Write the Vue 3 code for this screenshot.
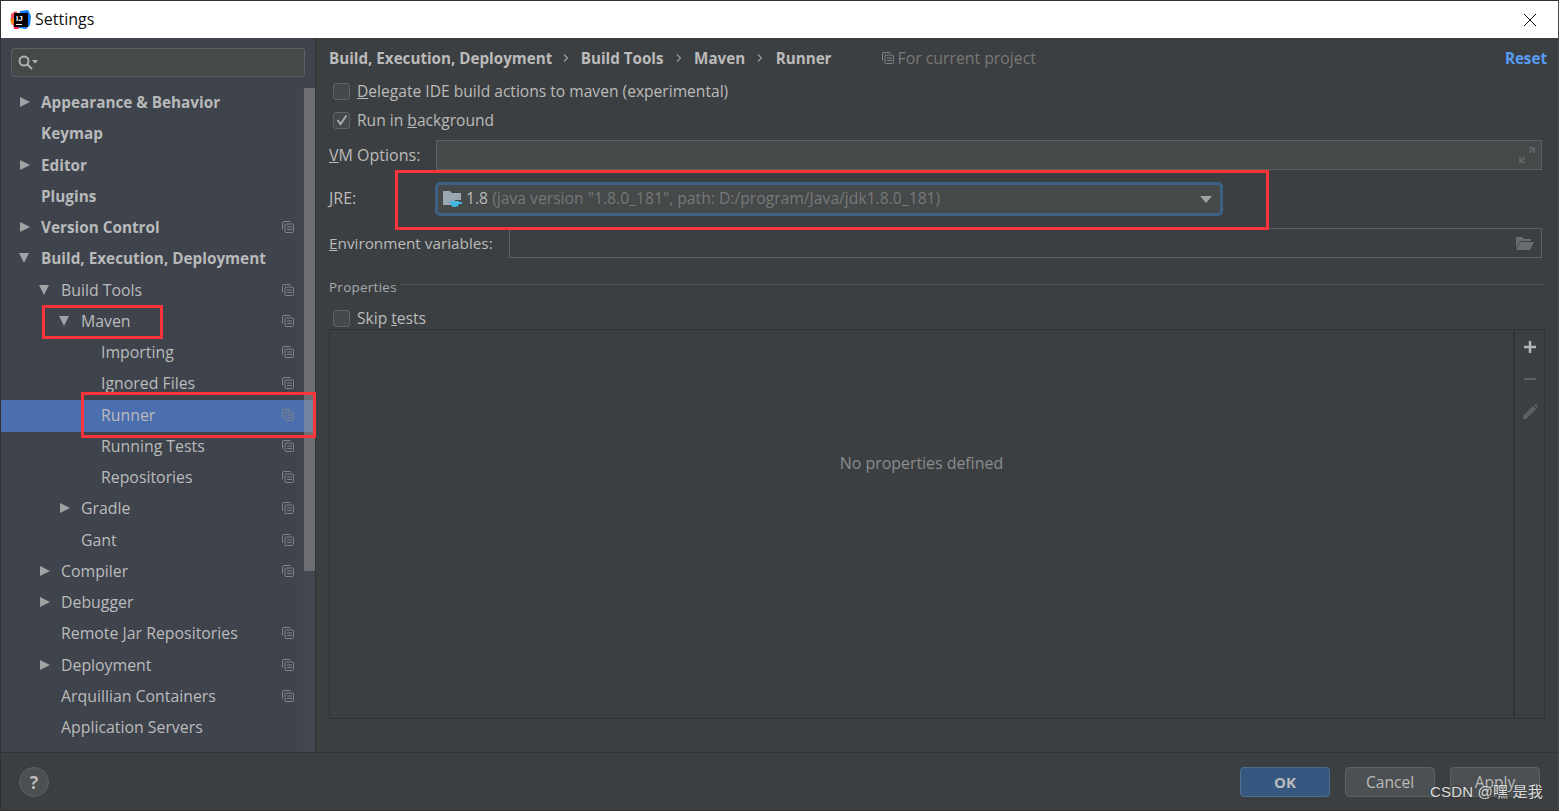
<script setup>
const tree = [
  { label: 'Appearance & Behavior', depth: 0, arrow: 'right', bold: true },
  { label: 'Keymap', depth: 0, bold: true },
  { label: 'Editor', depth: 0, arrow: 'right', bold: true },
  { label: 'Plugins', depth: 0, bold: true },
  { label: 'Version Control', depth: 0, arrow: 'right', bold: true, copy: true },
  { label: 'Build, Execution, Deployment', depth: 0, arrow: 'down', bold: true },
  { label: 'Build Tools', depth: 1, arrow: 'down', copy: true },
  { label: 'Maven', depth: 2, arrow: 'down', copy: true },
  { label: 'Importing', depth: 3, copy: true },
  { label: 'Ignored Files', depth: 3, copy: true },
  { label: 'Runner', depth: 3, copy: true, selected: true },
  { label: 'Running Tests', depth: 3, copy: true },
  { label: 'Repositories', depth: 3, copy: true },
  { label: 'Gradle', depth: 2, arrow: 'right', copy: true },
  { label: 'Gant', depth: 2, copy: true },
  { label: 'Compiler', depth: 1, arrow: 'right', copy: true },
  { label: 'Debugger', depth: 1, arrow: 'right' },
  { label: 'Remote Jar Repositories', depth: 1, copy: true },
  { label: 'Deployment', depth: 1, arrow: 'right', copy: true },
  { label: 'Arquillian Containers', depth: 1, copy: true },
  { label: 'Application Servers', depth: 1 }
]
const crumbs = ['Build, Execution, Deployment', 'Build Tools', 'Maven', 'Runner']
const marks = [
  { name: 'maven', left: 41, top: 304, width: 121, height: 34 },
  { name: 'runner', left: 80, top: 391, width: 235, height: 46 },
  { name: 'jre', left: 394, top: 169, width: 874, height: 60 }
]
</script>

<template>
  <div class="window">
    <header class="titlebar">
      <svg class="logo" width="21" height="20" viewBox="0 0 21 20">
        <path d="M1 4 6 1 9 5 4 12 1 10Z" fill="#fc4a5c" />
        <path d="M0 9 5 8 6 15 2 15Z" fill="#f97a12" />
        <path d="M3 14 8 12 9 19 4 19Z" fill="#fe2857" />
        <path d="M10 1 18 0 21 6 20 15 16 19 9 18Z" fill="#087cfa" />
        <path d="M4 3H18V17H4Z" fill="#000" />
        <text x="6" y="10.5" class="logo-text">IJ</text>
        <path d="M6 14H12V15H6Z" fill="#fff" />
      </svg>
      <span class="title">Settings</span>
      <svg class="close" width="14" height="14" viewBox="0 0 14 14">
        <path d="M1 1 13 13M13 1 1 13" stroke="#111" stroke-width="1" fill="none" />
      </svg>
    </header>

    <div class="body">
      <aside class="sidebar">
        <div class="search">
          <svg width="22" height="18" viewBox="0 0 22 18">
            <circle cx="7" cy="7" r="4.5" fill="none" stroke="#afb1b3" stroke-width="2" />
            <path d="M10.5 10.5 15 15" stroke="#afb1b3" stroke-width="2" />
            <path d="M15 6H21L18 9.5Z" fill="#afb1b3" />
          </svg>
        </div>
        <ul class="tree">
          <li
            v-for="item in tree"
            :key="item.label"
            class="row"
            :class="{ selected: item.selected, bold: item.bold }"
            :style="{ paddingLeft: 40 + item.depth * 20 + 'px' }"
          >
            <span v-if="item.arrow" class="arrow" :class="item.arrow"></span>
            <span>{{ item.label }}</span>
            <svg v-if="item.copy" class="copy" width="12" height="12" viewBox="0 0 12 12">
              <path d="M8.5 .5H2A1.500 1.500 0 0 0 .5 2V8.500" fill="none" stroke="#7f8386" />
              <rect x="3" y="3" width="8.500" height="8.500" rx="1" fill="none" stroke="#7f8386" />
              <path d="M5 6H10M5 8.500H10" stroke="#7f8386" />
            </svg>
          </li>
        </ul>
        <div class="scrolltrack"><div class="scrollthumb"></div></div>
      </aside>

      <main class="content">
        <div class="crumbs">
          <template v-for="(c, i) in crumbs" :key="c">
            <span class="crumb">{{ c }}</span>
            <svg v-if="i < crumbs.length - 1" class="sep" width="6" height="10" viewBox="0 0 6 10">
              <path d="M1 1.500 4.500 5 1 8.500" fill="none" stroke="#9a9c9e" stroke-width="1.200" />
            </svg>
          </template>
          <span class="project">
            <svg width="12" height="12" viewBox="0 0 12 12">
              <path d="M8.500 .5H2A1.500 1.500 0 0 0 .5 2V8.500" fill="none" stroke="#7f8386" />
              <rect x="3" y="3" width="8.500" height="8.500" rx="1" fill="none" stroke="#7f8386" />
              <path d="M5 6H10M5 8.500H10" stroke="#7f8386" />
            </svg>
            For current project
          </span>
          <a class="reset">Reset</a>
        </div>

        <label class="check first"><span class="box"></span><span><u>D</u>elegate IDE build actions to maven (experimental)</span></label>
        <label class="check second">
          <span class="box">
            <svg width="12" height="12" viewBox="0 0 12 12"><path d="M1.500 6 4.500 10 10.500 1.500" fill="none" stroke="#a7a9ab" stroke-width="2" /></svg>
          </span>
          <span>Run in <u>b</u>ackground</span>
        </label>

        <div class="field vm">
          <span class="flabel vm-label"><u>V</u>M Options:</span>
          <div class="input">
            <svg class="end" width="16" height="16" viewBox="0 0 16 16">
              <path d="M10 1H15V6M15 1 10 6M1 10V15H6M1 15 6 10" fill="none" stroke="#65686a" stroke-width="1.500" />
            </svg>
          </div>
        </div>

        <div class="field jre">
          <span class="flabel vm-label jre-label"><u>J</u>RE:</span>
          <div class="combo">
            <svg width="20" height="18" viewBox="0 0 20 18">
              <path d="M0 1H7L9 3H18V10H12V15H0Z" fill="#9aa7b0" />
              <path d="M7 11H16V12H19V14H16C15.500 16 14 17 12 17 9 17 7 15 7 11Z" fill="#40b6e0" />
            </svg>
            <span class="combo-text">1.8 <em>(java version "1.8.0_181", path: D:/program/Java/jdk1.8.0_181)</em></span>
            <span class="caret"></span>
          </div>
        </div>

        <div class="field env">
          <span class="flabel env-label"><u>E</u>nvironment variables:</span>
          <div class="input">
            <svg class="end" width="20" height="16" viewBox="0 0 20 16">
              <path d="M1 2H7L9 4H16V6H5L1 13Z" fill="#6a6d6f" />
              <path d="M5 7H19L15 15H1Z" fill="#6a6d6f" />
            </svg>
          </div>
        </div>

        <div class="section"><span>Properties</span><i></i></div>

        <label class="check skip"><span class="box"></span><span>Skip <u>t</u>ests</span></label>

        <div class="table">
          <div class="empty">No properties defined</div>
          <div class="tools">
            <svg width="14" height="14" viewBox="0 0 14 14"><path d="M7 1V13M1 7H13" stroke="#b4b6b8" stroke-width="2.500" /></svg>
            <svg width="14" height="14" viewBox="0 0 14 14"><path d="M1 7H13" stroke="#5e6163" stroke-width="2" /></svg>
            <svg class="pencil" width="18" height="18" viewBox="0 0 18 18"><path d="M2 13 12 3 15 6 5 16H2Z" fill="#5e6163" /><path d="M13 2 14.500 .8 17 3.500 16 5Z" fill="#5e6163" /></svg>
          </div>
        </div>
      </main>
    </div>

    <footer class="footer">
      <span class="help">?</span>
      <div class="buttons">
        <button class="btn primary">OK</button>
        <button class="btn">Cancel</button>
        <button class="btn">Apply</button>
      </div>
    </footer>

    <div v-for="m in marks" :key="m.name" class="mark" :style="{ left: m.left + 'px', top: m.top + 'px', width: m.width + 'px', height: m.height + 'px' }"></div>
    <div class="watermark">CSDN @嘿 是我</div>
  </div>
</template>

<style scoped>
* { box-sizing: border-box; }
.window {
  position: relative;
  width: 1559px;
  height: 811px;
  display: flex;
  flex-direction: column;
  overflow: hidden;
  border: 1px solid #2f3133;
  border-right-color: #4a4c4e;
  background: #3c3f41;
  color: #bbbbbb;
  font-family: "Open Sans", "Noto Sans", sans-serif;
  font-size: 15.6px;
}
.titlebar {
  height: 37px;
  flex: none;
  display: flex;
  align-items: center;
  background: #fff;
  padding: 0 21px 0 9px;
  color: #111;
}
.logo { flex: none; }
.logo-text { font: 800 8px "Liberation Sans", sans-serif; fill: #fff; }
.title { margin-left: 4px; font-size: 16px; margin-top: -2px; }
.close { margin-left: auto; }

.body { flex: 1; display: flex; min-height: 0; }
.sidebar {
  position: relative;
  width: 315px;
  flex: none;
  background: #3e434c;
  border-right: 1px solid #323232;
  padding-top: 10px;
  font-size: 15.850px;
}
.search {
  margin: 0 10px 0 10px;
  height: 29px;
  background: #45494a;
  border: 1px solid #5e6060;
  border-radius: 3px;
  display: flex;
  align-items: center;
  padding-left: 5px;
}
.tree { list-style: none; margin: 10px 0 0; padding: 0; }
.row {
  position: relative;
  height: 31.250px;
  padding-bottom: 1px;
  display: flex;
  align-items: center;
  white-space: nowrap;
}
.row.bold { font-weight: 700; font-size: 15.3px; color: #b8b9ba; }
.row.selected { background: #4b6eaf; box-shadow: 0 1px 0 #4b6eaf; }
.arrow { position: absolute; margin-left: -21px; width: 0; height: 0; }
.arrow.right { border-left: 10px solid #a0a2a4; border-top: 5.500px solid transparent; border-bottom: 5.500px solid transparent; }
.arrow.down { margin-left: -22px; border-top: 10px solid #a0a2a4; border-left: 5.500px solid transparent; border-right: 5.500px solid transparent; }
.copy { position: absolute; right: 21px; }
.scrolltrack {
  position: absolute;
  top: 50px;
  right: 0;
  bottom: 0;
  width: 12px;
  background: rgba(255, 255, 255, .025);
}
.scrollthumb { width: 11px; height: 483px; margin-left: 1px; background: rgba(150, 150, 150, .5); }

.content { flex: 1; min-width: 0; padding: 0 13px 0 13px; display: flex; flex-direction: column; }
.crumbs { height: 39px; flex: none; display: flex; align-items: center; padding-top: 1px; }
.crumb { font-weight: 700; font-size: 15.2px; }
.sep { margin: 0 12.500px 0 12px; }
.sep:first-of-type { margin: 0 11.500px 0 11px; }
.project { margin-left: 50px; color: #787878; display: flex; align-items: center; gap: 4px; font-size: 15.8px; }
.reset { margin-left: auto; font-weight: 700; font-size: 15.2px; color: #589df6; margin-right: -2px; }

.check { display: flex; align-items: center; height: 20px; gap: 7px; margin-left: 4px; }
.check.first { margin-top: 4px; }
.check.second { margin-top: 9px; }
.box {
  width: 17px;
  height: 17px;
  flex: none;
  border: 1px solid #606365;
  border-radius: 3px;
  background: #43494a;
  display: flex;
  align-items: center;
  justify-content: center;
}
.field { display: flex; align-items: center; flex: none; }
.field.vm { height: 30px; margin-top: 10px; }
.field.jre { height: 34px; margin-top: 12px; }
.field.env { height: 30px; margin-top: 12px; }
.flabel { flex: none; }
.vm-label { width: 107px; font-size: 16px; }
.jre-label { margin-top: -3px; }
.env-label { width: 180px; font-size: 15.3px; }
.input {
  flex: 1;
  height: 100%;
  margin-right: 3px;
  background: #45494a;
  border: 1px solid #5e6060;
  position: relative;
  display: flex;
  align-items: center;
  justify-content: flex-end;
  padding-right: 6px;
}
.env .input { background: #3c3f41; }
.vm .input { background: #45494a; }
.combo {
  width: 788px;
  height: 34px;
  margin-left: -1px;
  border: 3px solid #3d6185;
  border-radius: 5px;
  background: #45494a;
  display: flex;
  align-items: center;
  padding: 0 8px 0 5px;
}
.combo-text { margin-left: 3px; margin-top: -3px; font-size: 15.7px; }
.combo-text em { font-style: normal; color: #787878; }
.caret { margin-left: auto; border-top: 7px solid #a0a2a4; border-left: 6px solid transparent; border-right: 6px solid transparent; }
.section { display: flex; align-items: center; margin-top: 18px; height: 20px; font-size: 13.400px; letter-spacing: .3px; gap: 4px; }
.section span { margin-top: 1px; color: #a9abad; }
.section i { flex: 1; height: 1px; background: #515354; margin-top: -4px; margin-right: 1px; }
.check.skip { margin-top: 12px; }
.table {
  flex: none;
  height: 390px;
  margin-top: 1px;
  border: 1px solid #323232;
  display: flex;
}
.empty { flex: 1; display: flex; align-items: center; justify-content: center; color: #8a8c8e; padding-bottom: 123px; font-size: 15.9px; }
.tools {
  width: 31px;
  border-left: 2px solid #323232;
  display: flex;
  flex-direction: column;
  align-items: center;
  padding-top: 10px;
  gap: 18px;
}
.pencil { margin-top: -1px; }
.footer {
  height: 58px;
  flex: none;
  border-top: 1px solid #323232;
  display: flex;
  align-items: center;
  padding: 0 18px 0 18px;
}
.help {
  width: 30px;
  height: 30px;
  border-radius: 50%;
  background: #4c5052;
  border: 1px solid #5e6060;
  display: flex;
  align-items: center;
  justify-content: center;
  font-weight: 700;
  font-size: 18px;
}
.buttons { margin-left: auto; display: flex; gap: 15px; }
.btn {
  width: 90px;
  height: 30px;
  background: #4c5052;
  border: 1px solid #5e6060;
  border-radius: 4px;
  color: #bbbbbb;
  font: inherit;
  padding: 0;
}
.btn.primary { background: #365880; border-color: #4c708c; font-weight: 700; font-size: 15px; }
.mark { position: absolute; border: 3px solid #f9353b; pointer-events: none; }
.watermark {
  position: absolute;
  right: 15px;
  top: 781px;
  font: 15px/20px "Liberation Sans", "Noto Sans CJK SC", sans-serif;
  color: #dcdcdc;
  letter-spacing: .2px;
  text-shadow: 0 0 2px #333;
}
</style>

<style>
html, body { margin: 0; padding: 0; background: #3c3f41; overflow: hidden; }
</style>
